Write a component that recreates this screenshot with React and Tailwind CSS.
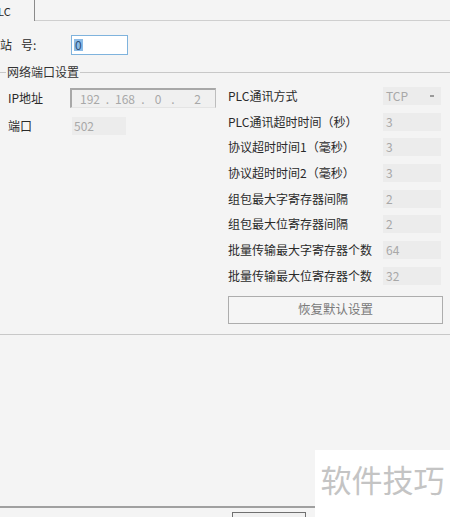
import React from 'react'

const font = { fontFamily: '"Noto Sans CJK SC", "Noto Sans", sans-serif' }

const rows = [
  ['PLC通讯方式', 'TCP', true],
  ['PLC通讯超时时间（秒）', '3'],
  ['协议超时时间1（毫秒）', '3'],
  ['协议超时时间2（毫秒）', '3'],
  ['组包最大字寄存器间隔', '2'],
  ['组包最大位寄存器间隔', '2'],
  ['批量传输最大字寄存器个数', '64'],
  ['批量传输最大位寄存器个数', '32'],
]

function Field({ value, combo }) {
  return (
    <div className="w-[58px] h-[18px] bg-[#ececec] flex items-center justify-between pl-[3px] pr-[7px] text-[12px] text-[#a8a8a8] leading-none">
      <span>{value}</span>
      {combo && <span className="w-[4px] h-[2px] bg-[#9a9a9a]" />}
    </div>
  )
}

export default function App() {
  return (
    <div className="relative w-[450px] h-[517px] overflow-hidden bg-[#f4f4f4] text-[#2a2a2a]" style={font}>
      {/* tab strip */}
      <div className="h-[21px] flex">
        <div className="w-[35px] h-[21px] border-r border-[#8a8a8a] flex items-center text-[11px] leading-none pt-[2px]">
          <span className="-ml-[2px]">LC</span>
        </div>
        <div className="flex-1 border-b border-[#cfcfcf]" />
      </div>

      {/* station */}
      <div className="mt-[14px] h-[20px] flex items-center">
        <div className="w-[71px] flex items-center text-[12px] leading-none">
          <span>站</span>
          <span className="ml-[9px]">号:</span>
        </div>
        <div className="w-[57px] h-[20px] border border-[#7fb3dd] bg-white flex items-center pl-[2px]">
          <span className="bg-[#8bbbe6] text-[#2b4f78] text-[12px] leading-none px-[1px]">0</span>
        </div>
      </div>

      {/* group box */}
      <div className="mt-[10px] border-b border-[#c8c8c8] pb-[10px]">
        <div className="h-[14px] flex items-center">
          <div className="w-[6px] h-px bg-[#c8c8c8]" />
          <span className="text-[12px] leading-none px-[1px] text-[#333]">网络端口设置</span>
          <div className="flex-1 h-px bg-[#c8c8c8]" />
        </div>

        <div className="flex mt-[4px]">
          {/* left */}
          <div className="w-[228px] pl-[8px] pt-[5px]">
            <div className="h-[20px] flex items-center">
              <span className="w-[62px] text-[12px] leading-none">IP地址</span>
              <div className="w-[146px] h-[20px] bg-[#f0f0f0] border-t-2 border-l-2 border-r border-b border-t-[#a8a8a8] border-l-[#a8a8a8] border-r-[#bdbdbd] border-b-[#e4e4e4] flex items-center text-[12px] text-[#a8a8a8] leading-none">
                <span className="w-[28px] text-right">192</span>
                <span className="w-[15px] text-center">.</span>
                <span className="w-[20px] text-center">168</span>
                <span className="w-[16px] text-center">.</span>
                <span className="w-[14px] text-center">0</span>
                <span className="w-[16px] text-center">.</span>
                <span className="w-[20px] text-right">2</span>
              </div>
            </div>
            <div className="h-[18px] mt-[9px] flex items-center">
              <span className="w-[64px] text-[12px] leading-none">端口</span>
              <div className="w-[54px] h-[18px] bg-[#ececec] flex items-center pl-[2px] text-[12px] text-[#a8a8a8] leading-none">502</div>
            </div>
          </div>

          {/* right */}
          <div className="flex-1">
            {rows.map(([label, value, combo]) => (
              <div key={label} className="h-[25.7px] flex items-center">
                <span className="w-[155px] text-[12px] leading-none whitespace-nowrap">{label}</span>
                <Field value={value} combo={combo} />
              </div>
            ))}
            <div className="mt-[7px] w-[215px] h-[28px] border border-[#adadad] bg-[#f5f5f5] flex items-center justify-center text-[12.5px] text-[#7a7a7a]">
              恢复默认设置
            </div>
          </div>
        </div>
      </div>

      {/* empty area */}
      <div className="h-[173px] border-b-2 border-[#a0a0a0]" />
      <div className="pl-[232px] pt-[4px]">
        <div className="w-[74px] h-[10px] border border-b-0 border-[#707070] bg-[#f0f0f0]" />
      </div>

      {/* watermark */}
      <div className="absolute right-0 bottom-0 w-[135px] h-[67px] bg-white flex items-center justify-center">
        <span className="text-[31px] text-[#c4c4c4] leading-none -mt-[10px]">软件技巧</span>
      </div>
    </div>
  )
}
